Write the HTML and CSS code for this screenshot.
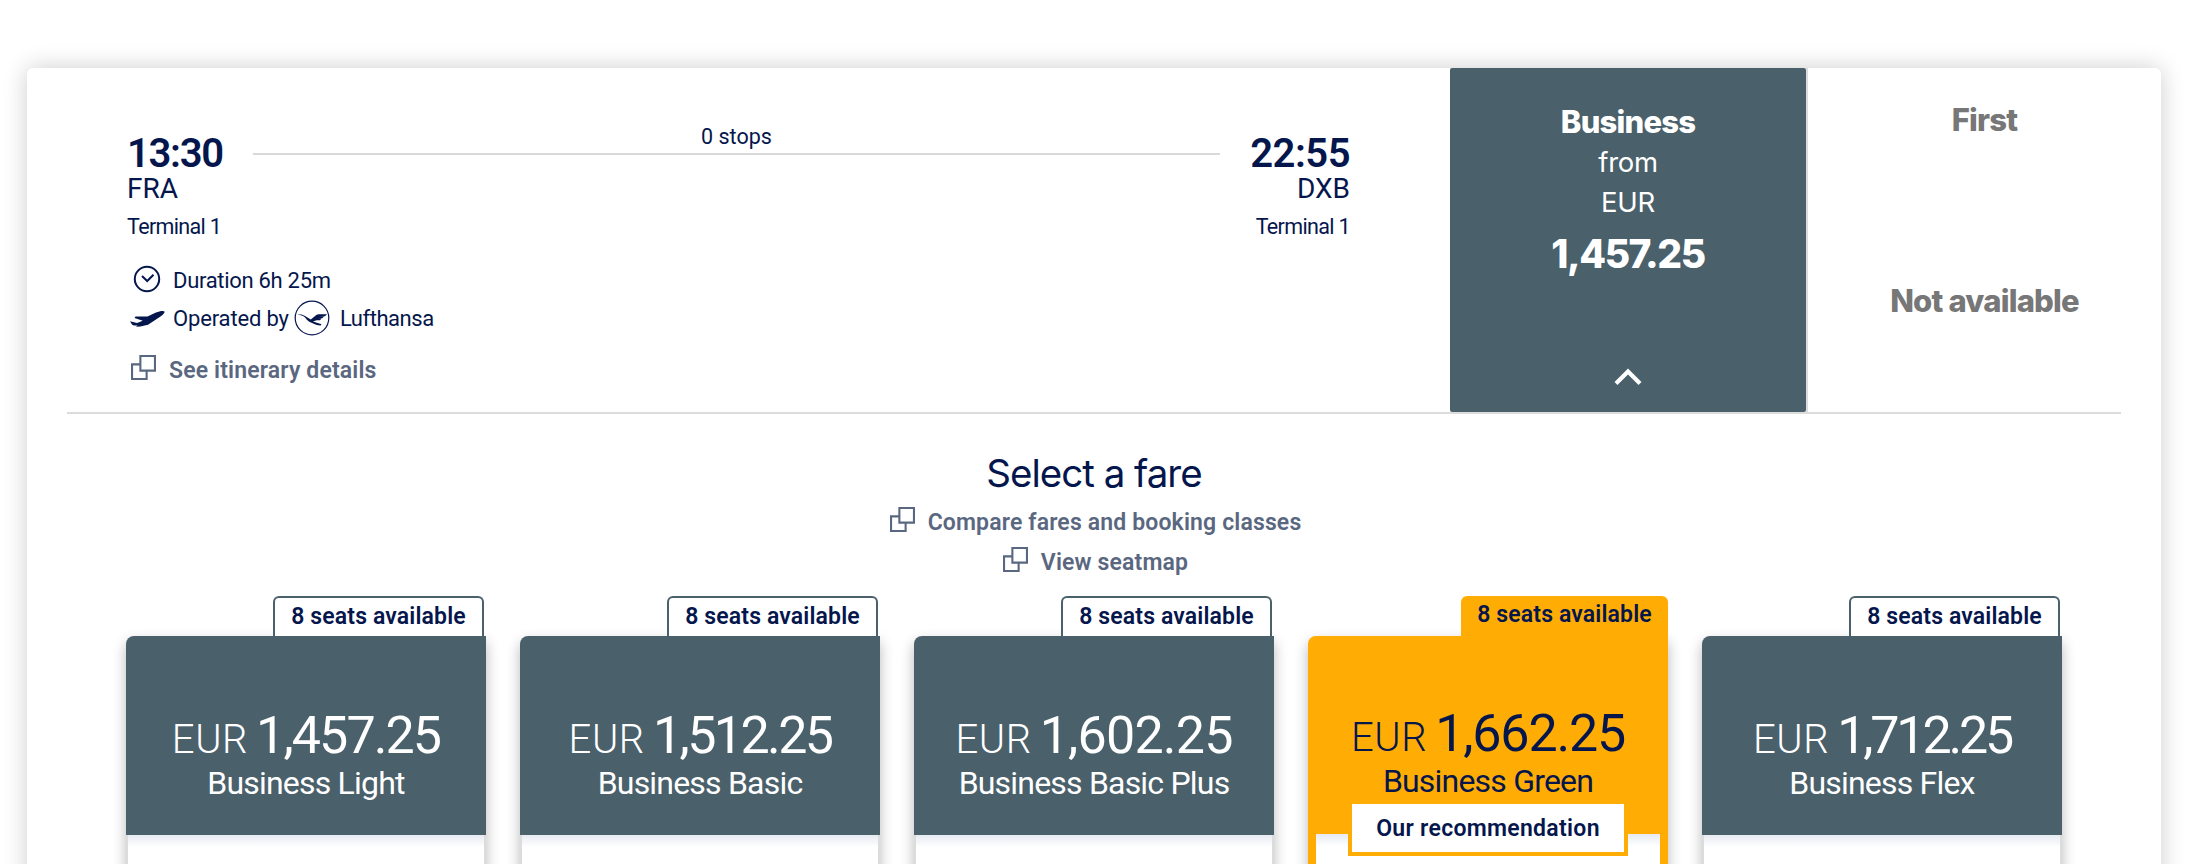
FILE: index.html
```html
<!DOCTYPE html>
<html lang="en">
  <head>
    <meta charset="utf-8">
    <meta name="viewport" content="width=device-width, initial-scale=1.0">
    <title>Select a fare</title>
    <link rel="stylesheet" href="styles.css">
  </head>
  <body>
    <svg class="sprite" width="0" height="0">
      <symbol id="icon-overlay" viewBox="0 0 24 24">
        <path d="M9 9H1v14h14v-8M9 1h14v14H9z" fill="none" stroke="currentColor" stroke-width="2"/>
      </symbol>
    </svg>
    <div class="flight-card">
      <div class="flight">
        <div class="flight-info">
          <div class="route">
            <div class="airport">
              <div class="time time-dep">13:30</div>
              <div class="code">FRA</div>
              <div class="terminal">Terminal 1</div>
            </div>
            <div class="stops">0 stops</div>
            <div class="airport airport-arrival">
              <div class="time time-arr">22:55</div>
              <div class="code">DXB</div>
              <div class="terminal">Terminal 1</div>
            </div>
          </div>
          <div class="meta">
            <svg class="icon-clock" width="28" height="28" viewBox="0 0 28 28">
              <circle cx="14" cy="14" r="12.2"/>
              <path d="M9 11l5.2 5 6.3-6.3"/>
            </svg>
            <span class="duration">Duration 6h 25m</span>
          </div>
          <div class="meta">
            <svg class="icon-plane" width="36" height="18" viewBox="0 0 36 18">
              <path d="M35.500 1.500C34.500.4 30.500 1 27 2.500L18.500 6.500H6.500L5.500 8l8.300 2.700L8 13 1 11.200 3 14.500c1.200 1.200 3 1.300 5.500.8l-1.500 1.500 4.500-.2L19 14.800 31.500 6.500C34 4.800 36 2.500 35.500 1.500z"/>
            </svg>
            <span class="operated">Operated by</span>
            <svg class="logo" width="36" height="36" viewBox="0 0 36 36">
              <circle cx="18" cy="18" r="16.800" fill="none" stroke="#05164d" stroke-width="1.200"/>
              <path d="M3.500 14.800c3-.8 5.500-.4 7.500 1.200l5.800 3.600 5.200-4.400c1-.8 2-.9 3.500-.9H33l-2 1.900h-6l5 .2-1.700 1.800h-4.500l3.700.3-1.500 1.700h-3.500L19 21.500l8.500 2.700-.8 1.300c-3.500-.4-7-1.600-11-3.600-2.500-1.300-4-4-6.200-5.600-1.500-1-3.500-1.200-6-1.500z"/>
            </svg>
            <span class="carrier">Lufthansa</span>
          </div>
          <a class="link link-details"><svg class="icon-overlay"><use href="#icon-overlay"/></svg><span>See itinerary details</span></a>
        </div>
        <div class="cabin cabin-business">
          <div class="cabin-name">Business</div>
          <div class="cabin-from">from</div>
          <div class="cabin-from">EUR</div>
          <div class="cabin-price">1,457.25</div>
          <svg class="icon-chevron" width="30" height="20" viewBox="0 0 30 20">
            <path d="M3 16.500L15 4.500l12 12"/>
          </svg>
        </div>
        <div class="cabin cabin-first">
          <div class="cabin-name">First</div>
          <div class="cabin-none">Not available</div>
        </div>
      </div>
      <div class="fare-section">
        <h2 class="title">Select a fare</h2>
        <div class="links">
          <a class="link"><svg class="icon-overlay"><use href="#icon-overlay"/></svg><span>Compare fares and booking classes</span></a>
          <a class="link"><svg class="icon-overlay"><use href="#icon-overlay"/></svg><span>View seatmap</span></a>
        </div>
        <div class="fares">
          <div class="fare">
            <div class="seats">8 seats available</div>
            <div class="fare-box">
              <div class="fare-head">
                <div class="price"><span class="currency">EUR</span><span class="amount">1,457.25</span></div>
                <div class="fare-name">Business Light</div>
              </div>
              <div class="fare-body"></div>
            </div>
          </div>
          <div class="fare">
            <div class="seats">8 seats available</div>
            <div class="fare-box">
              <div class="fare-head">
                <div class="price"><span class="currency">EUR</span><span class="amount amount-512">1,512.25</span></div>
                <div class="fare-name">Business Basic</div>
              </div>
              <div class="fare-body"></div>
            </div>
          </div>
          <div class="fare">
            <div class="seats">8 seats available</div>
            <div class="fare-box">
              <div class="fare-head">
                <div class="price"><span class="currency">EUR</span><span class="amount amount-602">1,602.25</span></div>
                <div class="fare-name">Business Basic Plus</div>
              </div>
              <div class="fare-body"></div>
            </div>
          </div>
          <div class="fare fare-recommended">
            <div class="seats">8 seats available</div>
            <div class="fare-box">
              <div class="fare-head">
                <div class="price"><span class="currency">EUR</span><span class="amount amount-662">1,662.25</span></div>
                <div class="fare-name">Business Green</div>
              </div>
              <div class="fare-body"></div>
              <div class="recommendation">Our recommendation</div>
            </div>
          </div>
          <div class="fare">
            <div class="seats">8 seats available</div>
            <div class="fare-box">
              <div class="fare-head">
                <div class="price"><span class="currency">EUR</span><span class="amount amount-712">1,712.25</span></div>
                <div class="fare-name">Business Flex</div>
              </div>
              <div class="fare-body"></div>
            </div>
          </div>
        </div>
      </div>
    </div>
  </body>
</html>
```

FILE: styles.css
```css
* {
  box-sizing: border-box;
}
body {
  margin: 0;
  padding: 68px 31px 0 27px;
  height: 864px;
  overflow: hidden;
  background: #fff;
  color: #05164d;
  font-family: Roboto, "Liberation Sans", sans-serif;
}
.sprite {
  position: absolute;
}
svg {
  flex: none;
}
.flight-card {
  height: 830px;
  border-radius: 6px;
  background: #fff;
  box-shadow: 0 0 24px rgba(0,0,0,0.2);
}

/* flight row */
.flight {
  display: flex;
  height: 344px;
}
.flight-info {
  width: 1423px;
  padding: 66px 100px 0 100px;
}
.route {
  display: flex;
}
.airport {
  width: 126px;
}
.airport-arrival {
  width: 130px;
  text-align: right;
}
.time {
  font-size: 40px;
  line-height: 40px;
  font-weight: 600;
}
.time-dep {
  letter-spacing: -1.3px;
}
.time-arr {
  letter-spacing: -0.5px;
}
.code {
  font-size: 28px;
  line-height: 30px;
}
.terminal {
  margin-top: 9px;
  font-size: 21.5px;
  line-height: 28px;
  letter-spacing: -0.65px;
}
.stops {
  width: 967px;
  height: 32px;
  margin-top: -11px;
  border-bottom: 2px solid #d9d9d9;
  text-align: center;
  font-size: 21.5px;
  line-height: 28px;
}
.meta {
  display: flex;
  align-items: center;
  height: 38px;
  font-size: 22px;
}
.route + .meta {
  margin-top: 20px;
}
.duration {
  letter-spacing: -0.3px;
}
.operated {
  letter-spacing: -0.15px;
}
.carrier {
  letter-spacing: -0.45px;
}
.icon-clock {
  margin: 0 12px 2px 6px;
  fill: none;
  stroke: #05164d;
  stroke-width: 2;
}
.icon-plane {
  margin: 2px 8px 0 2px;
  fill: #05164d;
}
.logo {
  margin: 0 10px 0 5px;
  fill: #05164d;
}
.link {
  display: flex;
  align-items: center;
  justify-content: center;
  height: 40px;
  color: #5a6780;
  font-size: 23px;
  font-weight: 600;
  letter-spacing: 0.15px;
}
.icon-overlay {
  width: 25px;
  height: 25px;
  margin: 0 13px 6px 3px;
}
.link-details {
  justify-content: flex-start;
  margin-top: 13px;
}
.link-details .icon-overlay {
  margin-left: 4px;
}

/* cabin columns */
.cabin {
  display: flex;
  flex-direction: column;
  align-items: center;
  font-family: Inter, "Liberation Sans", sans-serif;
}
.cabin-business {
  width: 356px;
  padding-top: 34px;
  border-radius: 2px;
  background: #4a606b;
  color: #fff;
}
.cabin-name,
.cabin-none {
  font-size: 31px;
  line-height: 40px;
  font-weight: 800;
  letter-spacing: -0.8px;
}
.cabin-from {
  font-size: 27.5px;
  line-height: 40px;
  letter-spacing: -0.3px;
}
.cabin-price {
  margin-top: 8px;
  font-size: 39px;
  line-height: 48px;
  font-weight: 800;
  letter-spacing: -1.5px;
}
.icon-chevron {
  margin-top: 89px;
  fill: none;
  stroke: #fff;
  stroke-width: 4.2;
}
.cabin-first {
  flex: 1;
  padding-top: 32px;
  border-left: 2px solid #dcdcdc;
  color: #777;
}
.cabin-none {
  margin-top: 141px;
}

/* fare selection */
.fare-section {
  margin: 0 40px;
  padding-top: 35px;
  border-top: 2px solid #dcdcdc;
}
.title {
  margin: 0;
  text-align: center;
  font-family: Inter, "Liberation Sans", sans-serif;
  font-size: 38.5px;
  line-height: 48px;
  font-weight: 400;
  letter-spacing: -1px;
}
.links {
  margin-top: 5px;
}
.fares {
  display: flex;
  gap: 34px;
  margin: 14px 59px 0;
}
.fare {
  display: flex;
  flex-direction: column;
  width: 360px;
}
.seats {
  position: relative;
  z-index: 1;
  align-self: flex-end;
  width: 211px;
  height: 40px;
  margin-right: 2px;
  border: 2px solid #4a606b;
  border-bottom: none;
  border-radius: 6px 6px 0 0;
  background: #fff;
  text-align: center;
  font-size: 23px;
  line-height: 38px;
  font-weight: 600;
  letter-spacing: 0.15px;
}
.fare-box {
  position: relative;
  border-radius: 8px 0 0 0;
  box-shadow: 0 6px 14px rgba(0,0,0,0.28);
}
.fare-head {
  height: 199px;
  padding-top: 71px;
  border-radius: 8px 0 0 0;
  background: #4a606b;
  color: #fff;
  text-align: center;
}
.price {
  font-size: 52px;
  line-height: 58px;
  white-space: nowrap;
}
.currency {
  margin-right: 8px;
  font-size: 40px;
  line-height: 40px;
  font-weight: 300;
  letter-spacing: 0.6px;
}
.amount {
  letter-spacing: -1.9px;
}
.amount-512 {
  letter-spacing: -2.6px;
}
.amount-602 {
  letter-spacing: -0.8px;
}
.amount-662 {
  letter-spacing: -1.2px;
}
.amount-712 {
  letter-spacing: -3.2px;
}
.fare-name {
  font-size: 32px;
  line-height: 36px;
  letter-spacing: -0.8px;
}
.fare-body {
  height: 60px;
  border: solid #dcdcdc;
  border-width: 0 2px;
  background: linear-gradient(#e6eaf2, #fff 12px);
}
.fare-recommended .seats {
  width: 207px;
  margin-right: 0;
  border: none;
  background: #ffad05;
}
.fare-recommended .fare-head {
  height: 198px;
  padding-top: 69px;
  background: #ffad05;
  color: #05164d;
}
.fare-recommended .fare-body {
  border-color: #ffad05;
  border-width: 0 8px;
}
.recommendation {
  position: absolute;
  top: 164px;
  left: 40px;
  width: 280px;
  height: 56px;
  border: 4px solid #ffad05;
  background: #fff;
  text-align: center;
  font-size: 23px;
  line-height: 50px;
  font-weight: 600;
  letter-spacing: 0.3px;
}
```
